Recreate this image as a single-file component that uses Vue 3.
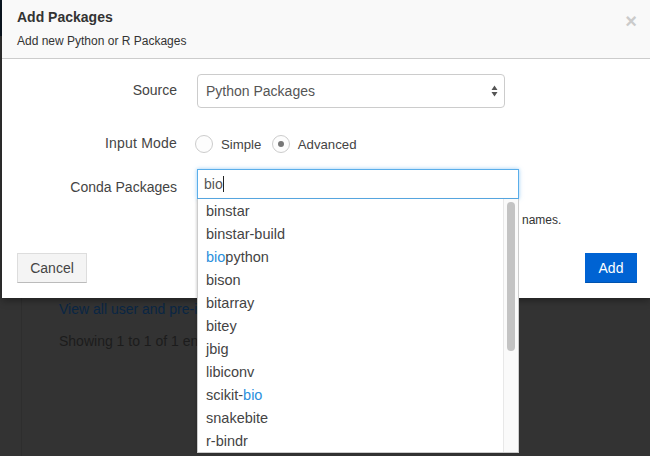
<script setup>
const matches = [
  { id: 1, before: 'binstar' },
  { id: 2, before: 'binstar-build' },
  { id: 3, before: '', hit: 'bio', after: 'python' },
  { id: 4, before: 'bison' },
  { id: 5, before: 'bitarray' },
  { id: 6, before: 'bitey' },
  { id: 7, before: 'jbig' },
  { id: 8, before: 'libiconv' },
  { id: 9, before: 'scikit-', hit: 'bio' },
  { id: 10, before: 'snakebite' },
  { id: 11, before: 'r-bindr' },
]
</script>

<template>
  <div class="page">
    <section class="modal">
      <header class="modal-header">
        <div>
          <h3>Add Packages</h3>
          <p>Add new Python or R Packages</p>
        </div>
        <span class="close">×</span>
      </header>

      <div class="modal-body">
        <div class="row source-row">
          <label>Source</label>
          <div class="select">
            Python Packages
            <svg class="arrows" width="7" height="12" viewBox="0 0 7 12">
              <path d="M3.5 0.5 L6.5 5 H0.5 Z M0.5 7 H6.5 L3.5 11.5 Z" fill="#555" />
            </svg>
          </div>
        </div>

        <div class="row mode-row">
          <label>Input Mode</label>
          <div class="radios">
            <span class="radio"></span>
            <span class="radio-text">Simple</span>
            <span class="radio checked"></span>
            <span class="radio-text">Advanced</span>
          </div>
        </div>

        <div class="row conda-row">
          <label>Conda Packages</label>
          <div class="typeahead">
            <div class="input">bio<span class="caret"></span></div>
            <div class="dropdown">
              <div v-for="item in matches" :key="item.id" class="option">
                {{ item.before }}<span v-if="item.hit" class="hit">{{ item.hit }}</span>{{ item.after }}
              </div>
              <div class="track"><div class="thumb"></div></div>
            </div>
          </div>
        </div>

        <p class="help">names.</p>
      </div>

      <footer class="modal-footer">
        <button class="btn">Cancel</button>
        <button class="btn primary">Add</button>
      </footer>
    </section>

    <div class="behind">
      <div class="side"></div>
      <div class="content">
        <a>View all user and pre-i</a>
        <p>Showing 1 to 1 of 1 en</p>
      </div>
    </div>
  </div>
</template>

<style>
body {
  margin: 0;
}
</style>

<style scoped>
.page {
  width: 650px;
  height: 456px;
  overflow: hidden;
  background: linear-gradient(#0b1723 36px, #333 36px);
  font-family: "Liberation Sans", Arial, sans-serif;
  font-size: 14px;
  color: #333;
}

.modal {
  position: relative;
  z-index: 1;
  margin-left: 2px;
  background: #fff;
  box-shadow: 0 2px 8px rgba(0, 0, 0, 0.4);
}

.modal-header {
  display: flex;
  justify-content: space-between;
  height: 58px;
  padding: 0 13px 0 15px;
  background: #f9f9f9;
  border-bottom: 1px solid #ccc;
}

.modal-header h3 {
  margin: 9px 0 0;
  font-size: 14px;
  line-height: 17px;
  font-weight: bold;
}

.modal-header p {
  margin: 8px 0 0;
  font-size: 12px;
  line-height: 14px;
}

.close {
  margin-top: 9px;
  font-size: 20px;
  line-height: 24px;
  font-weight: bold;
  color: #cbcbcb;
}

.modal-body {
  padding-top: 15px;
}

.row {
  display: grid;
  grid-template-columns: 175px auto;
  column-gap: 20px;
  align-items: center;
}

.row label {
  text-align: right;
  color: #444;
}

.source-row label,
.mode-row label {
  padding-bottom: 2px;
}

.mode-row label {
  letter-spacing: 0.2px;
}

.conda-row label {
  padding-top: 6px;
}

.select {
  position: relative;
  box-sizing: border-box;
  width: 308px;
  height: 34px;
  padding-left: 8px;
  line-height: 32px;
  color: #555;
  border: 1px solid #ccc;
  border-radius: 4px;
}

.arrows {
  position: absolute;
  right: 6px;
  top: 10px;
}

.mode-row {
  margin-top: 27px;
}

.radios {
  display: flex;
  align-items: center;
  height: 18px;
  margin-left: -2px;
  font-size: 13.2px;
  color: #444;
}

.radio {
  box-sizing: border-box;
  display: flex;
  align-items: center;
  justify-content: center;
  width: 18px;
  height: 18px;
  border: 1px solid #ccc;
  border-radius: 50%;
  background: #fdfdfd;
}

.radio.checked::after {
  content: "";
  width: 6px;
  height: 6px;
  border-radius: 50%;
  background: #777;
}

.radio-text {
  margin: 0 10.5px 0 8px;
}

.conda-row {
  margin-top: 16px;
}

.typeahead {
  position: relative;
  width: 322px;
}

.input {
  box-sizing: border-box;
  height: 30px;
  padding-left: 6px;
  line-height: 28px;
  color: #555;
  border: 1px solid #5aaeea;
  box-shadow: 0 0 4px rgba(82, 168, 236, 0.6);
}

.caret {
  display: inline-block;
  width: 1px;
  height: 16px;
  vertical-align: -3px;
  background: #222;
}

.dropdown {
  position: absolute;
  top: 100%;
  left: 0;
  z-index: 2;
  box-sizing: border-box;
  width: 100%;
  height: 254px;
  padding-top: 1px;
  background: #fff;
  border: 1px solid #ccc;
  border-top: none;
  box-shadow: -1px 0 2px rgba(0, 0, 0, 0.15);
}

.option {
  height: 23px;
  padding-left: 8px;
  font-size: 14.5px;
  line-height: 23px;
  color: #444;
}

.hit {
  color: #2a8fdc;
}

.track {
  position: absolute;
  top: 0;
  right: 0;
  bottom: 0;
  width: 15px;
  padding: 3px 3px 0 3px;
  box-sizing: border-box;
  background: #fafafa;
  border-left: 1px solid #e8e8e8;
}

.thumb {
  width: 8px;
  height: 149px;
  border-radius: 4px;
  background: #c3c3c3;
}

.help {
  margin: 14px 0 0 520px;
  font-size: 12px;
  line-height: 14px;
  color: #333;
}

.modal-footer {
  display: flex;
  justify-content: space-between;
  width: 620px;
  padding: 26px 0 15px 15px;
}

.btn {
  width: 70px;
  height: 30px;
  padding: 0;
  font-family: inherit;
  font-size: 14px;
  color: #444;
  background: #f4f4f4;
  border: 1px solid #ddd;
  border-bottom-color: #bbb;
}

.btn.primary {
  width: 52px;
  color: #fff;
  background: #0063d3;
  border-color: #0063d3;
  border-bottom-color: #0052ad;
}

.behind {
  display: flex;
  height: 158px;
}

.side {
  width: 21px;
  border-right: 1px solid #2e2e2e;
}

.content {
  width: 138px;
  overflow: hidden;
  white-space: nowrap;
  padding: 3px 0 0 37px;
  line-height: 17px;
}

.content a {
  color: #0a2644;
}

.content p {
  margin: 15px 0 0;
  color: #1c1c1c;
}
</style>
